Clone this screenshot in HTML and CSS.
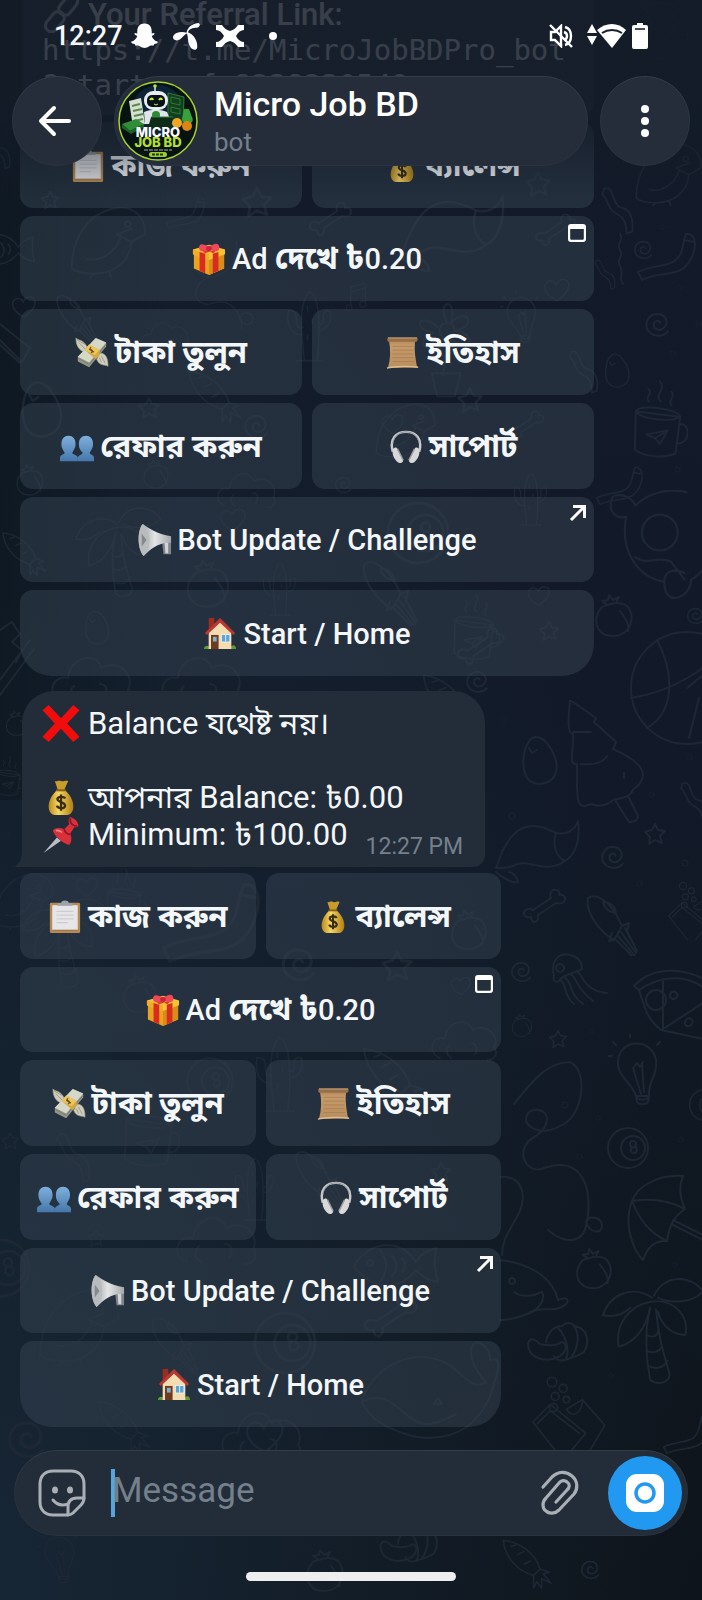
FILE: index.html
```
<!DOCTYPE html>
<html lang="bn">
<head>
<meta charset="utf-8">
<meta name="viewport" content="width=device-width, initial-scale=1">
<title>Micro Job BD</title>
<link rel="stylesheet" href="styles.css">
</head>
<body>
<svg class="defs" aria-hidden="true">
  <defs>
    <linearGradient id="g-gold" x1="0" x2="1"><stop offset="0" stop-color="#b98a1c"/><stop offset=".4" stop-color="#f5d765"/><stop offset="1" stop-color="#b07d12"/></linearGradient>
    <linearGradient id="g-paper" x1="0" x2="0" y1="0" y2="1"><stop offset="0" stop-color="#b08558"/><stop offset=".2" stop-color="#c59b6c"/><stop offset="1" stop-color="#b98e5e"/></linearGradient>
    <linearGradient id="g-blue" x1="0" x2="0" y1="0" y2="1"><stop offset="0" stop-color="#7fb0dc"/><stop offset="1" stop-color="#4577ab"/></linearGradient>
    <linearGradient id="g-horn" x1="0" x2="1"><stop offset="0" stop-color="#8f9295"/><stop offset=".5" stop-color="#e4e5e6"/><stop offset="1" stop-color="#a5a8ab"/></linearGradient>

    <symbol id="e-clip" viewBox="0 0 36 36"><rect x="2" y="3" width="32" height="32" rx="1.500" fill="#b68a50"/><rect x="4.500" y="5.500" width="27" height="26.500" fill="#e6e6e8"/><path d="M9 12h18M9 16h18M9 20h18M9 24h12" stroke="#c5c6ca"/><path d="M10 6V3.500h4a4 3 0 0 1 8 0h4V6z" fill="#9da3ab"/><path d="M4.500 32h27" stroke="#8f6a3a"/></symbol>
    <symbol id="e-bag" viewBox="0 0 36 36"><path d="M12 2c2 1 3-1 6 0s4-1 7 0l-4 9h-6z" fill="#c79c2c"/><path d="M14 11h8c4 4 8 9 8 16 0 5-3 8-6 8H12c-3 0-6-3-6-8 0-7 4-12 8-16z" fill="url(#g-gold)"/><path d="M13.500 11h9" stroke="#8a5f16" stroke-width="2"/><path d="M22 19c-1-2-7-2.500-7.500.5C14.500 23 22 22 22 26c-.5 3.500-7 3-8 0M18 15v16" fill="none" stroke="#3a2c0c" stroke-width="2.200"/></symbol>
    <symbol id="e-gift" viewBox="0 0 36 36"><path d="M2 12v16l16 7 16-7V12L18 18z" fill="#e9a31f"/><path d="M18 18v17l16-7V12z" fill="#d98c16"/><path d="M1 8l17-5 17 5v5l-17 6-17-6z" fill="#f7c136"/><path d="M1 8v5l17 6V13z" fill="#f0ad28"/><path d="M8 10.500l6 2V33l-6-2.500zM22 12.500l6-2v20L22 33z" fill="#d82b22"/><path d="M9 8l13-3 6 2-14 5zM26 8L13 4l-4 2 14 6z" fill="#e23a30"/><path d="M18 8C13 10 8 11 7.500 7 7 2 11 0 18 6c6-6 11-5 11 0s-6 4-11 2z" fill="#ef4858"/><circle cx="18" cy="7" r="3" fill="#c92740"/></symbol>
    <symbol id="e-cash" viewBox="0 0 36 36"><path d="M13 12C9 3 3 5 1 2c0 8 3 13 9 15zM26 18c7 0 9 6 9 14-4-2-9 0-12-7z" fill="#cfcdbb" stroke="#a09f8e" stroke-width=".7"/><path d="M4 7l7 7M2 4l9 5M28 21l4 8M26 23l2 5" stroke="#8f8e7c" stroke-width=".8"/><path d="M3 22L22 2l11 5v4L15 33 3 27z" fill="#939788"/><path d="M3 22L22 2l11 5-18 21z" fill="#d5d8c9"/><path d="M4 24l11 6L33 9" stroke="#6f735f" fill="none" stroke-width=".8"/><path d="M10 14.500l5-5.500 11 5.500v5l-4 5z" fill="#d7a83e"/><path d="M10 14.500l5-5.500 11 5.500-5 5.500z" fill="#e8c664"/><path d="M17 12c-4 3 5 2 0 6M15 14l5 3" fill="none" stroke="#6d4e10" stroke-width="1.300"/></symbol>
    <symbol id="e-scroll" viewBox="0 0 36 36"><path d="M3 4l28 1c-1.500 8 0 18 2 28L2 34C5 24 5 14 3 4z" fill="url(#g-paper)"/><path d="M2 2h31c1 2 0 4-1 4H3C1 6 1 3 2 2z" fill="#9a6f45"/><path d="M2 2h31" stroke="#d9b486"/><path d="M7 11h22M7 15h22M7 19h22M7 23h22M7 27h23" stroke="#a77b4e" stroke-width=".8"/><path d="M1 34c8-2 24-2 33-1" stroke="#e0bd8e" stroke-width="1.600" fill="none"/></symbol>
    <symbol id="e-people" viewBox="0 0 36 36"><g fill="url(#g-blue)"><path d="M19 33v-4c1-3 5-3 5-5-3-3-4-5-4-9 0-6 3-9 7.500-9S35 9 35 15c0 4-2 6-3.500 9 0 2 4 2 4.500 5v4z"/><path d="M0 33v-4c.5-3 4.500-3 5-5-2-3-3.500-5-3.500-9C1.500 9 4.500 6 9 6s7.500 3 7.500 9c0 4-2 6-3.500 9 0 2 5 2 6 5v4z"/></g></symbol>
    <symbol id="e-phones" viewBox="0 0 36 36"><path d="M4 23C0 9 8 2 18 2s18 7 14 21" fill="none" stroke="#c9cacc" stroke-width="2.600"/><path d="M4 14C6 5 12 2 18 2s12 3 14 12" fill="none" stroke="#8b8e92" stroke-width="1"/><path d="M4 21c1-3 4-3 5-1l6 12c0 3-4 4-6 2C6 31 3 27 4 21zM32 21c-1-3-4-3-5-1l-6 12c0 3 4 4 6 2 3-3 6-7 5-13z" fill="#d8d8da"/><path d="M9 20l6 12M27 20l-6 12" stroke="#9b9ea2" stroke-width="1.600"/></symbol>
    <symbol id="e-horn" viewBox="0 0 36 36"><path d="M25 15h10v18h-8z" fill="#7f8488"/><path d="M28 18h4v14h-3z" fill="#d2d5d8"/><path d="M5 1c6 4 15 11 30 13v7c-13-1-22 7-29 14C-1 27-1 8 5 1z" fill="url(#g-horn)"/><path d="M5 1C-1 8-1 27 6 35c4-5 6-11 6-17C12 11 9 5 5 1z" fill="#b9bcbf"/><path d="M4 11v14l5-7z" fill="#85888c"/></symbol>
    <symbol id="e-home" viewBox="0 0 36 36"><path d="M1 34c0-4 4-4 5-3h24c2-2 5-1 5 3z" fill="#5f9a35"/><path d="M6 1h6v12H6z" fill="#9c2b22"/><path d="M6 16L18 4l12 12v18H6z" fill="#f3dcb0"/><path d="M18 1L2 17l2 2L18 6l14 13 2-2z" fill="#b93730"/><path d="M8.500 19h8v15h-8z" fill="#6d3a22"/><path d="M10.500 21h4v5h-4z" fill="#7fb2cf"/><path d="M19 18h10v9H19z" fill="#eee"/><path d="M20 19h8v7h-8z" fill="#5aa5d8"/><path d="M24 19v7" stroke="#eee"/></symbol>
    <symbol id="e-cross" viewBox="0 0 36 36"><path d="M6 0l12 13L30 0l6 5-12 13 12 13-6 5-12-13L6 36l-6-5 12-13L0 5z" fill="#f20d0d"/></symbol>
    <symbol id="e-pin" viewBox="0 0 36 36"><path d="M14 21l4 3L1 36z" fill="#b9bec4"/><path d="M27 1c4 1 7 4 8 8 0 2-2 2-4 2l-4 6c2 5 1 9-1 11-6-1-14-8-16-14 3-3 7-3 11-1l5-5c-1-3-1-6 1-7z" fill="#d9303a"/><path d="M27 2c-1 5 3 8 7 8M21 13c1 3 3 5 6 5" stroke="#8f1520" fill="none" stroke-width="1.600"/><path d="M13 14c3 0 5 1 6 2" stroke="#f58087" stroke-width="1.500" fill="none"/></symbol>
    <symbol id="e-link" viewBox="0 0 36 36"><g fill="none" stroke="#b9bec4" stroke-width="3"><rect x="14" y="3" width="22" height="12" rx="6" transform="rotate(-50 25 9)"/><rect x="1" y="19" width="22" height="12" rx="6" transform="rotate(-50 12 25)"/></g></symbol>
    <symbol id="i-web" viewBox="0 0 20 20"><path fill="#fff" fill-rule="evenodd" d="M4 1h12a3 3 0 0 1 3 3v12a3 3 0 0 1-3 3H4a3 3 0 0 1-3-3V4a3 3 0 0 1 3-3zm-.8 5v9.500c0 .8.500 1.300 1.300 1.300h11c.8 0 1.300-.5 1.300-1.300V6z"/></symbol>
    <symbol id="i-out" viewBox="0 0 20 20"><path d="M4 16L17 3M6 2.500h11.500V14" fill="none" stroke="#fff" stroke-width="3"/></symbol>

    <symbol id="d-star" viewBox="0 0 24 24"><path d="M12 2l3 6 7 1-5 5 2 7-7-3-6 4 1-7-5-5 7-2z"/></symbol>
    <symbol id="d-swirl" viewBox="0 0 24 24"><path d="M22 18c-5 6-15 5-19-2C0 8 6 1 13 2c7 0 10 8 6 12-3 4-10 3-10-2 0-4 5-5 6-2"/></symbol>
    <symbol id="d-dot" viewBox="0 0 24 24"><circle cx="12" cy="12" r="9"/></symbol>
    <symbol id="d-bone" viewBox="0 0 48 36"><path d="M13 23l18-12c-2-5 1-9 5-8 3 0 4 3 3 5 4-1 7 2 6 5-1 3-5 4-9 3L18 28c1 4-1 7-4 7-3-1-3-3-3-5-4 1-8-1-7-5 1-3 5-4 9-2z"/></symbol>
    <symbol id="d-heart" viewBox="0 0 36 36"><path d="M18 31C4 24 2 16 4 11c3-6 11-5 13 1 2-7 10-9 14-4 4 7-2 15-13 23z"/></symbol>
    <symbol id="d-egg" viewBox="0 0 40 52"><path d="M14 2c12-1 24 22 21 34-2 12-18 17-27 9C-2 35 2 5 14 2zM8 13l3 5 5-3"/></symbol>
    <symbol id="d-mug" viewBox="0 0 60 84"><path d="M6 36l46 6-5 38c-14 5-32 3-42-4zM6 36c3-8 46-2 46 6-10 6-42 2-46-6zM51 50c12-4 12 22-3 19M17 60l22-4-8 14-5-6zM26 64l13-8M20 26c-6-5 5-8-1-13M32 26c-8-7 6-12-1-21M43 30c-5-5 5-9 0-14"/></symbol>
    <symbol id="d-tree" viewBox="0 0 84 124"><path d="M4 0L30 18l-2 4 22 20-3 7c18 8 34 18 29 30-4 10-9 9-9 11-3 8-12 8-20 10-9 8-17 6-22 4-16 7-14-5-14-40C2 66 8 50 7 34 0 34 3 12 4 0zM7 32h18M15 64c16 1 22-2 26-8M49 100l14 22c8 0 10-4 8-8l-9-18M58 73v5"/></symbol>
    <symbol id="d-cap" viewBox="0 0 90 66"><path d="M2 48C14 10 32-4 62 13c9 2 18-1 22-12 2 18-2 33-13 40-20 14-36-3-50 4-9 4-14 3-19 3zM62 13c-4 12 0 24 9 28M2 52c6 6 18 12 22 10-1-6-6-10-9-10"/></symbol>
    <symbol id="d-squid" viewBox="0 0 54 62"><path d="M3 4c8-6 24 4 34 28l-8 14C12 36 0 16 3 4zM18 8c8 0 12 5 13 11-6 0-12-5-13-11zM37 32l7-3-2 8 10 20M29 46l-5 1 3-8M33 42l17 20M36 38l15 21M30 45l17 17M40 34l11 21"/></symbol>
    <symbol id="d-jelly" viewBox="0 0 60 54"><path d="M4 24C0 8 10 0 20 3c9 2 12 8 12 14-5 4-20 5-23 12-3 2-7-1-5-5zM10 12a4 4 0 1 0 .1 0M10 28c8 4 2 14 14 24M15 26c8 4 2 14 18 26M21 22c7 6 5 14 22 27M27 19c6 5 8 20 30 22"/></symbol>
    <symbol id="d-pizza" viewBox="0 0 90 80"><path d="M2 18C22-4 60-2 88 22l-4 8C60 4 30 6 7 22zM7 22c8 26 10 30 22 40l56 12M31 11v50l46-30M38 26c3-5 9-1 7 3-4 5-8 0-7-3zM54 52c5-5 9 2 5 5-4 3-8 0-5-5z"/><circle cx="24" cy="32" r="10"/></symbol>
    <symbol id="d-bulb" viewBox="0 0 60 80"><path d="M28 62C24 48 8 42 10 26 13 4 44 4 48 26c2 16-8 20-7 36zM28 62c2 5 11 5 13 0l-1 6c-2 3-9 3-11 0zM25 34l8 26M36 58l-2-28M25 34l4-5 3 4 3-5M5 8l3 3M22 0v3M52 8l-3 3M0 22h4"/></symbol>
    <symbol id="d-umb" viewBox="0 0 90 90"><path d="M60 2C36 0 14 12 9 27 0 50 10 76 20 86c4-12 12-20 24-19 2-14 6-24 18-32-6-13-6-24-2-33zM9 27c20-3 36-1 53 8M9 27c8 20 18 32 35 40M50 46l40 20M48 50l40 20"/></symbol>
    <symbol id="d-palm" viewBox="0 0 108 112"><path d="M52 20C34 8 10 14 2 38c10 2 20 0 28-8M52 24C28 28 14 48 18 70c16-4 28-18 32-40M54 24c20-2 36 14 32 34-12 0-24-8-28-24M54 18C64-4 92-4 104 14c-12 12-34 12-46 6M50 32c-6 20-4 50 0 72 8 6 20 2 20-6-6-20-12-40-14-66M46 58c8 4 12 0 12-4M46 74c8 4 14 0 16-4M50 90c8 4 14 0 18-6"/></symbol>
    <symbol id="d-ball" viewBox="0 0 120 120"><circle cx="60" cy="60" r="56"/><path d="M30 12c16 30 20 70-10 88M4 70c40-6 80-30 94-54M60 60l22-18 6 22 24 4M62 110l10-40"/></symbol>
    <symbol id="d-rope" viewBox="0 0 90 130"><path d="M64 2c4 30-14 48-36 52-26 0-24-24-10-26 16-2 20 18 6 26-30 14-20 44 4 38 30-12 50 20 42 48-2 14-14 22-28 14l-10-5M70 112c2-10 18-8 18 2s-16 12-18-2"/></symbol>
    <symbol id="d-sock" viewBox="0 0 40 60"><path d="M4 4c12-4 8 18 18 20s14 12 12 26l-6 2c0-14-4-18-12-22S8 14 2 10z"/></symbol>
    <symbol id="d-band" viewBox="0 0 60 50"><path d="M50 2c14-2 10 24-2 34-10 8-26 4-42 12l-4-8c16-8 28-4 38-12 8-8 6-16 10-26zM48 8l10 2"/></symbol>
    <symbol id="d-fruit" viewBox="0 0 44 44"><path d="M16 10C4 10-2 34 14 40c20 6 32-14 22-28-6-6-16-4-20-2zM16 10l-6-4 6-1 1-5 4 5 6-3-3 6M28 16c6 8 10 14 8 20"/></symbol>
    <symbol id="d-cloud" viewBox="0 0 90 60"><path d="M12 52C-6 44 4 24 18 28 20 8 44 0 52 18c14-10 34 6 26 22 6 6 0 14-8 14M24 36c-6 6-4 12 2 16M50 34c8 0 8 10 4 14"/></symbol>
    <symbol id="d-turtle" viewBox="0 0 90 100"><path d="M10 6c-6 14 4 20 12 18-6 30 10 54 34 58 0 10 4 16 12 14 8-2 12-10 12-16 12-6 18-20 18-30M10 6c10-4 18 2 20 8 12-12 30-16 46-12M30 60c12 8 20-2 32 4l12 16M56 82c0-10 8-12 18-8"/><circle cx="52" cy="38" r="16"/></symbol>
    <symbol id="d-bird" viewBox="0 0 90 80"><path d="M4 70C4 40 20 12 50 6c20-4 34 10 32 28l-14 8c-2 22-20 34-40 34-12 0-20-2-24-6zM20 60c14 4 30-6 36-22M64 20a3 3 0 1 0 .1 0M68 42L52 34l16-6M28 76l-4 4M44 74l2 6"/></symbol>
    <symbol id="d-fish" viewBox="0 0 90 60"><path d="M4 30C20 4 50 2 66 26c6-10 14-12 20-14-2 12-2 20 2 34-8-2-16-4-22-12C48 56 20 54 4 30zM20 24a3 3 0 1 0 .1 0M30 14c8 10 8 22 0 32M42 20c6 6 6 14 0 20M52 22c4 4 4 10 0 14"/></symbol>
    <symbol id="d-orange" viewBox="0 0 66 42"><path d="M2 22c2-8 8-4 12 0 8 2 16 2 22-2 6 2 4 10-2 14-14 8-32 2-32-12zM20 20c2-10 8-16 16-16 4-4 10-4 12 0 14 2 16 16 10 26-6 4-12 6-20 8-6 2-8-2-10-4M32 6c8 8 12 22 8 32M48 4c6 8 4 22-2 30"/></symbol>
    <symbol id="d-whale" viewBox="0 0 140 110"><path d="M2 66C10 34 50 10 84 26c20 10 26 30 42 20-14-14-20-34-10-40 10 2 14 10 14 18 6-2 10 0 8 10-4 12-6 30-20 46-14 18-40 26-66 20C26 92 10 84 2 66zM2 66c20-10 30 0 46 14 14 12 26 10 48-2M78 62l-4 6h8z"/></symbol>
    <symbol id="d-carrot" viewBox="0 0 70 70"><path d="M4 4c20 2 40 16 46 36l-8 8C20 42 6 24 4 4zM50 40l12 4-8 2 10 12-12-6 0 12-6-8-4 8v-16M14 12l6-2M22 22l8-4M30 34l8-4"/></symbol>
    <symbol id="d-cactus" viewBox="0 0 70 100"><path d="M28 92C24 60 20 20 34 6c14 4 14 50 10 86zM26 60C8 60 6 44 8 30c8-2 10 4 10 12s2 10 8 8M46 54c14-2 16-14 14-24-8-2-10 4-8 12-2 6-4 4-6 4M18 92h34M32 24v6M38 40v6M32 60v6"/></symbol>
    <symbol id="d-pop" viewBox="0 0 96 100"><path d="M4 60L26 38l44 36-28 34zM10 62l16-16 36 28M46 44L66 32l28 32-20 34M46 44c6 12 20 6 20-12"/><circle cx="28" cy="10" r="6"/><circle cx="42" cy="18" r="5"/><circle cx="32" cy="28" r="5"/><circle cx="46" cy="32" r="4"/><circle cx="30" cy="42" r="5"/></symbol>
    <symbol id="d-ring" viewBox="0 0 44 44"><circle cx="22" cy="22" r="20"/><circle cx="27" cy="22" r="12"/><circle cx="27" cy="18" r="3"/><circle cx="28" cy="24" r="3"/></symbol>
    <symbol id="d-notes" viewBox="0 0 40 60"><path d="M8 40V8l24-6v32M8 16l24-6"/><circle cx="5" cy="43" r="5"/><circle cx="28" cy="37" r="5"/></symbol>
    <symbol id="d-flower" viewBox="0 0 60 100"><path d="M30 22c-12-26 12-26 4 0 18-18 28 4 4 8 26 4 16 24-4 8 8 24-16 26-10 2-14 18-30 2-8-8-24-4-14-22 4-6M30 42l-4 34M14 74h30l-6 24H20z"/><circle cx="30" cy="30" r="8"/></symbol>
  </defs>
</svg>

<div class="screen">
  <svg class="wallpaper" viewBox="0 0 702 1600" preserveAspectRatio="xMidYMin slice" aria-hidden="true">
    <use href="#d-ball" x="630" y="0" width="60" height="62"/><use href="#d-bird" x="630" y="140" width="80" height="66"/><use href="#d-sock" x="600" y="185" width="38" height="56"/><use href="#d-band" x="636" y="232" width="60" height="50"/><use href="#d-swirl" x="633" y="240" width="20" height="20"/><use href="#d-dot" x="659" y="224" width="6" height="6"/><use href="#d-sock" x="594" y="250" width="24" height="52"/><path d="M620 234c5 8-5 8 0 16s-5 8 0 16-3 10 3 18"/>
    <use href="#d-dot" x="676" y="284" width="7" height="7"/><use href="#d-swirl" x="644" y="312" width="26" height="26"/><use href="#d-egg" x="604" y="352" width="28" height="38"/><use href="#d-dot" x="669" y="350" width="7" height="7"/><use href="#d-dot" x="695" y="320" width="7" height="7"/><use href="#d-mug" x="630" y="375" width="58" height="84"/><use href="#d-dot" x="674" y="466" width="7" height="7"/><use href="#d-band" x="594" y="466" width="50" height="40"/>
    <use href="#d-fruit" x="592" y="594" width="44" height="46"/><use href="#d-turtle" x="600" y="490" width="104" height="112"/><use href="#d-swirl" x="686" y="604" width="18" height="24"/><use href="#d-ball" x="622" y="628" width="130" height="120"/><use href="#d-tree" x="566" y="700" width="84" height="124"/><use href="#d-egg" x="521" y="735" width="40" height="52"/><use href="#d-dot" x="500" y="717" width="7" height="7"/><use href="#d-cap" x="494" y="820" width="90" height="66"/><use href="#d-star" x="643" y="822" width="24" height="24"/><use href="#d-swirl" x="600" y="845" width="25" height="25"/><use href="#d-dot" x="508" y="812" width="8" height="8"/><use href="#d-dot" x="686" y="754" width="7" height="7"/><use href="#d-sock" x="676" y="780" width="40" height="50"/><use href="#d-dot" x="681" y="859" width="8" height="8"/><use href="#d-dot" x="636" y="880" width="7" height="7"/><use href="#d-dot" x="648" y="791" width="7" height="7"/>
    <use href="#d-bone" x="520" y="887" width="48" height="36"/><use href="#d-squid" x="584" y="894" width="56" height="62"/><use href="#d-pop" x="660" y="880" width="70" height="60"/><use href="#d-swirl" x="510" y="959" width="22" height="26"/><use href="#d-jelly" x="550" y="952" width="60" height="54"/><use href="#d-pizza" x="632" y="968" width="90" height="80"/><use href="#d-star" x="548" y="1029" width="20" height="20"/><use href="#d-fruit" x="510" y="1014" width="24" height="24"/><use href="#d-dot" x="589" y="1028" width="6" height="6"/><use href="#d-bulb" x="608" y="1034" width="60" height="80"/>
    <path d="M514 1104c16-20 32-42 56-42 18 8 14 50-6 62-10 6-20 8-26 6-18-4-14-22 0-20 14 2 10 18-2 26-24 12-10 40 8 32 40-14 50 24 42 58-4 18-22 18-38 4M586 1222c4-8 16-4 16 4s-12 8-16-4"/><use href="#d-dot" x="561" y="1101" width="8" height="8"/><use href="#d-dot" x="595" y="1115" width="6" height="6"/><use href="#d-dot" x="576" y="1153" width="7" height="7"/><use href="#d-ring" x="606" y="1126" width="44" height="44"/><use href="#d-ring" x="688" y="1088" width="34" height="34"/><use href="#d-dot" x="677" y="1136" width="7" height="7"/><use href="#d-umb" x="623" y="1174" width="90" height="90"/><use href="#d-fruit" x="573" y="1248" width="42" height="44"/><path d="M500 1177c22-2 28 18 18 38-10 18-16 26-16 40M500 1260c36 4 54 22 58 40 8-4 12 0 8 4-8 8-22 4-30 6-12 6-26 10-36 10M514 1292c8 6 20 4 28 0 4 8-4 18-12 20M512 1278a3 3 0 1 0 .1 0"/><use href="#d-palm" x="600" y="1278" width="108" height="110"/><use href="#d-orange" x="526" y="1322" width="66" height="42"/><use href="#d-dot" x="672" y="1262" width="6" height="6"/><use href="#d-dot" x="608" y="1373" width="6" height="6"/><use href="#d-pop" x="520" y="1374" width="96" height="80"/><use href="#d-band" x="656" y="1415" width="60" height="40"/>
    <use href="#d-sock" x="-16" y="120" width="30" height="64"/><use href="#d-fish" x="-30" y="215" width="66" height="70"/><use href="#d-heart" x="10" y="292" width="28" height="30"/><path d="M0 324l30 24-8 14L0 340M0 345l20 18"/><use href="#d-egg" x="8" y="380" width="70" height="60"/><use href="#d-fruit" x="14" y="458" width="32" height="46"/><use href="#d-carrot" x="0" y="525" width="50" height="60"/><path d="M0 630l12-8 8 12-8 8 10 8-6 12M0 680l30-40M0 695l34-46"/><use href="#d-fruit" x="4" y="710" width="26" height="28"/><use href="#d-mug" x="-6" y="740" width="30" height="70"/><use href="#d-dot" x="4" y="831" width="7" height="7"/>
    <use href="#d-star" x="40" y="190" width="20" height="20"/><use href="#d-bird" x="68" y="200" width="84" height="80"/><use href="#d-star" x="240" y="185" width="34" height="34"/><use href="#d-band" x="165" y="190" width="40" height="46"/><use href="#d-bone" x="306" y="200" width="48" height="36"/><use href="#d-cap" x="400" y="180" width="110" height="110"/><use href="#d-star" x="524" y="170" width="28" height="28"/><use href="#d-bone" x="532" y="206" width="46" height="46"/><use href="#d-heart" x="542" y="275" width="30" height="30"/><use href="#d-flower" x="418" y="300" width="58" height="100"/><use href="#d-cactus" x="282" y="262" width="56" height="130"/><use href="#d-notes" x="346" y="270" width="24" height="60"/><use href="#d-bulb" x="500" y="290" width="44" height="60"/><use href="#d-rope" x="190" y="240" width="66" height="90"/><use href="#d-cloud" x="140" y="316" width="54" height="40"/><use href="#d-squid" x="52" y="294" width="50" height="50"/><use href="#d-star" x="137" y="396" width="24" height="24"/><use href="#d-swirl" x="243" y="414" width="26" height="26"/><use href="#d-carrot" x="186" y="360" width="60" height="76"/><use href="#d-fruit" x="136" y="460" width="40" height="30"/><use href="#d-cloud" x="216" y="460" width="66" height="60"/><use href="#d-star" x="456" y="386" width="28" height="28"/><use href="#d-bird" x="372" y="400" width="70" height="60"/><use href="#d-bone" x="506" y="404" width="40" height="40"/><use href="#d-heart" x="380" y="410" width="26" height="28"/><use href="#d-swirl" x="334" y="476" width="18" height="18"/><use href="#d-cactus" x="508" y="470" width="46" height="60"/><use href="#d-sock" x="568" y="346" width="34" height="56"/>
    <use href="#d-palm" x="74" y="494" width="90" height="120"/><use href="#d-heart" x="216" y="505" width="34" height="30"/><use href="#d-ring" x="378" y="500" width="80" height="66"/><use href="#d-squid" x="360" y="560" width="60" height="66"/><use href="#d-cactus" x="250" y="560" width="60" height="60"/><use href="#d-fruit" x="180" y="560" width="56" height="50"/><use href="#d-mug" x="440" y="590" width="70" height="70"/><use href="#d-heart" x="526" y="582" width="26" height="28"/><use href="#d-star" x="538" y="620" width="22" height="22"/><use href="#d-bone" x="440" y="625" width="80" height="40"/><use href="#d-egg" x="80" y="610" width="36" height="36"/><use href="#d-cloud" x="40" y="650" width="110" height="60"/><use href="#d-cloud" x="160" y="650" width="90" height="60"/><use href="#d-swirl" x="465" y="670" width="24" height="24"/><use href="#d-carrot" x="420" y="672" width="60" height="60"/>
    <use href="#d-bird" x="-10" y="870" width="70" height="60"/><use href="#d-palm" x="20" y="880" width="90" height="130"/><use href="#d-heart" x="74" y="872" width="26" height="30"/><use href="#d-band" x="160" y="880" width="100" height="86"/><use href="#d-mug" x="100" y="866" width="50" height="60"/><use href="#d-fruit" x="120" y="970" width="40" height="50"/><use href="#d-swirl" x="280" y="945" width="36" height="40"/><use href="#d-star" x="380" y="946" width="34" height="40"/><use href="#d-fruit" x="448" y="908" width="42" height="46"/><use href="#d-heart" x="448" y="974" width="26" height="24"/><use href="#d-cloud" x="430" y="1010" width="74" height="60"/><use href="#d-cactus" x="250" y="1030" width="60" height="90"/><use href="#d-ring" x="180" y="1056" width="60" height="50"/><use href="#d-carrot" x="360" y="1040" width="70" height="80"/><use href="#d-mug" x="120" y="1080" width="60" height="90"/><use href="#d-star" x="0" y="1130" width="20" height="22"/><use href="#d-sock" x="50" y="1130" width="50" height="60"/><use href="#d-squid" x="290" y="1150" width="60" height="60"/><use href="#d-cactus" x="230" y="1140" width="50" height="100"/><use href="#d-star" x="86" y="1228" width="20" height="20"/><use href="#d-cloud" x="150" y="1210" width="140" height="60"/><use href="#d-fish" x="350" y="1236" width="90" height="60"/><use href="#d-ring" x="-30" y="1235" width="62" height="66"/><use href="#d-star" x="430" y="1160" width="22" height="24"/>
    <use href="#d-bird" x="36" y="1270" width="90" height="110"/><use href="#d-ring" x="250" y="1310" width="70" height="66"/><use href="#d-squid" x="150" y="1310" width="50" height="70"/><use href="#d-bone" x="360" y="1280" width="60" height="70"/><use href="#d-whale" x="360" y="1336" width="140" height="110"/><use href="#d-swirl" x="6" y="1420" width="40" height="40"/><use href="#d-carrot" x="90" y="1398" width="70" height="60"/><use href="#d-heart" x="240" y="1414" width="50" height="44"/><use href="#d-cloud" x="210" y="1405" width="110" height="60"/><use href="#d-bulb" x="30" y="1530" width="60" height="60"/><use href="#d-fruit" x="300" y="1550" width="50" height="44"/><use href="#d-orange" x="365" y="1525" width="90" height="40"/><use href="#d-carrot" x="500" y="1535" width="56" height="60"/><use href="#d-swirl" x="580" y="1560" width="20" height="20"/>
  </svg>

  <main class="chat">
    <article class="bubble bubble-link">
      <p class="line strong"><svg class="emoji" role="img" aria-label="🔗"><use href="#e-link"/></svg>Your Referral Link:</p>
      <p class="code">https://t.me/MicroJobBDPro_bot<br>?start=ref_8238230549</p>
    </article>

    <div class="keyboard">
      <button type="button"><svg class="emoji" aria-hidden="true"><use href="#e-clip"/></svg><b>কাজ করুন</b></button>
      <button type="button"><svg class="emoji" aria-hidden="true"><use href="#e-bag"/></svg><b>ব্যালেন্স</b></button>
      <button type="button" class="wide"><svg class="emoji" aria-hidden="true"><use href="#e-gift"/></svg><span>Ad <b>দেখে ৳</b>0.20</span><svg class="corner" aria-hidden="true"><use href="#i-web"/></svg></button>
      <button type="button"><svg class="emoji" aria-hidden="true"><use href="#e-cash"/></svg><b>টাকা তুলুন</b></button>
      <button type="button"><svg class="emoji" aria-hidden="true"><use href="#e-scroll"/></svg><b>ইতিহাস</b></button>
      <button type="button"><svg class="emoji" aria-hidden="true"><use href="#e-people"/></svg><b>রেফার করুন</b></button>
      <button type="button"><svg class="emoji" aria-hidden="true"><use href="#e-phones"/></svg><b>সাপোর্ট</b></button>
      <button type="button" class="wide"><svg class="emoji" aria-hidden="true"><use href="#e-horn"/></svg><span>Bot Update / Challenge</span><svg class="corner" aria-hidden="true"><use href="#i-out"/></svg></button>
      <button type="button" class="wide last"><svg class="emoji" aria-hidden="true"><use href="#e-home"/></svg><span>Start / Home</span></button>
    </div>

    <article class="bubble bubble-balance">
      <svg class="tail" viewBox="0 0 20 30" aria-hidden="true"><path d="M8 0v14c0 8-3 13-8 16h20V0z"/></svg>
      <p class="line"><svg class="emoji" role="img" aria-label="❌"><use href="#e-cross"/></svg>Balance যথেষ্ট নয়।</p>
      <p class="line"></p>
      <p class="line"><svg class="emoji" role="img" aria-label="💰"><use href="#e-bag"/></svg>আপনার Balance: ৳0.00</p>
      <p class="line"><svg class="emoji" role="img" aria-label="📌"><use href="#e-pin"/></svg>Minimum: ৳100.00<time>12:27 PM</time></p>
    </article>

    <div class="keyboard keyboard-narrow">
      <button type="button"><svg class="emoji" aria-hidden="true"><use href="#e-clip"/></svg><b>কাজ করুন</b></button>
      <button type="button"><svg class="emoji" aria-hidden="true"><use href="#e-bag"/></svg><b>ব্যালেন্স</b></button>
      <button type="button" class="wide"><svg class="emoji" aria-hidden="true"><use href="#e-gift"/></svg><span>Ad <b>দেখে ৳</b>0.20</span><svg class="corner" aria-hidden="true"><use href="#i-web"/></svg></button>
      <button type="button"><svg class="emoji" aria-hidden="true"><use href="#e-cash"/></svg><b>টাকা তুলুন</b></button>
      <button type="button"><svg class="emoji" aria-hidden="true"><use href="#e-scroll"/></svg><b>ইতিহাস</b></button>
      <button type="button"><svg class="emoji" aria-hidden="true"><use href="#e-people"/></svg><b>রেফার করুন</b></button>
      <button type="button"><svg class="emoji" aria-hidden="true"><use href="#e-phones"/></svg><b>সাপোর্ট</b></button>
      <button type="button" class="wide"><svg class="emoji" aria-hidden="true"><use href="#e-horn"/></svg><span>Bot Update / Challenge</span><svg class="corner" aria-hidden="true"><use href="#i-out"/></svg></button>
      <button type="button" class="wide last"><svg class="emoji" aria-hidden="true"><use href="#e-home"/></svg><span>Start / Home</span></button>
    </div>
  </main>

  <header class="top">
    <div class="status">
      <span class="clock">12:27</span>
      <svg class="st-ghost" viewBox="0 0 28 26" aria-hidden="true"><path d="M14 0c5 0 7.500 3.500 7.500 8v2.500l2.500-.5c1 1 0 2-2.500 3 1 3 3 5 6.500 6-.5 2-2 2-4 2.500l-.7 1.500c-3-.7-4 .2-5 1-2.500 2-6 2-8.600 0-1-.8-2-1.700-5-1L4 21.500c-2-.5-3.500-.5-4-2.500 3.500-1 5.500-3 6.500-6C4 12 3 11 4 10l2.500.5V8C6.500 3.500 9 0 14 0z"/></svg>
      <svg class="st-prop" viewBox="0 0 28 28" aria-hidden="true"><path d="M14 10C15 5 19 1 26 0c3 .5 2 4-1 5-5 0-8 1-9.500 4.500C22 12 26 19 25 26c-1 3-5 2-7-1-3-5-2-9-3.500-14C11 12 8 19 3 18-1 17-1 13 3 10.500 7 9 11 9 14 10z"/></svg>
      <svg class="st-x" viewBox="0 0 28 22" aria-hidden="true"><path d="M0 0h6c2 3 4 5 8 6 4-1 6-3 8-6h6v5c-3 0-6 2-8 6 2 4 5 6 8 6v5h-6c-2-3-4-5-8-6-4 1-6 3-8 6H0v-5c3 0 6-2 8-6C6 7 3 5 0 5z"/></svg>
      <span class="st-dot"></span>
      <svg class="st-mute" viewBox="0 0 24 24" aria-hidden="true"><path d="M2 8h4l6-6v20l-6-6H2zM16 3c8 2 8 16 0 18M15 8c4 1 4 7 0 8" fill="none" stroke="#fff" stroke-width="2.400"/><path d="M1 1l22 22" stroke="#fff" stroke-width="2.400"/></svg>
      <svg class="st-wifi" viewBox="0 0 39 26" aria-hidden="true"><path d="M5 1l5 9H0zM5 22l5-9H0z"/><path d="M25 25L10 7c9-8 21-8 29 0z"/><path d="M15 10c6-4 14-4 20 0" fill="none" stroke="#17202d" stroke-width="2"/></svg>
      <svg class="st-batt" viewBox="0 0 16 26" aria-hidden="true"><path d="M5 0h6v2h3a2 2 0 0 1 2 2v20a2 2 0 0 1-2 2H2a2 2 0 0 1-2-2V4a2 2 0 0 1 2-2h3z"/><path d="M3 6h10" stroke="#17202d" stroke-width="1.600"/></svg>
    </div>
    <nav class="bar">
      <button type="button" class="round" aria-label="Back"><svg viewBox="0 0 38 32" width="38" height="32" fill="none" stroke="#fff" stroke-width="4" stroke-linecap="round" stroke-linejoin="round"><path d="M31 16H3M16 3L3 16l13 13"/></svg></button>
      <a class="peer" href="#profile">
        <svg class="avatar" viewBox="0 0 80 80" aria-hidden="true">
          <circle cx="40" cy="40" r="39" fill="#071310" stroke="#a6d32c" stroke-width="1.500"/>
          <circle cx="40" cy="30" r="26" fill="#0d2438"/>
          <path d="M50 12l16 4-1 28-15-4zM53 16l9 2v6l-9-2zM53 26l9 2v5l-9-2z" fill="#10401d" stroke="#2f7a32"/>
          <path d="M11 20l12-3 4 26-12 3z" fill="#d5dfd2"/><path d="M14 25l8-2M15 30l9-2M16 35l9-2M17 40l8-2" stroke="#5c8a4e" stroke-width="2"/>
          <path d="M37 10V5" stroke="#dfe6ea" stroke-width="1.500"/><circle cx="37" cy="5" r="1.800" fill="#b7e437"/>
          <rect x="26" y="10" width="24" height="19" rx="9" fill="#e7ecef"/><rect x="29" y="14" width="18" height="12" rx="5" fill="#071015"/>
          <path d="M32 19q2-3 3 0M41 19q2-3 3 0" stroke="#c6f03b" stroke-width="2.200" fill="none"/><path d="M36 23q2 2 4 0" stroke="#c6f03b" fill="none"/>
          <path d="M26 31c7-3 16-3 23 0l5 12H27z" fill="#dfe5e8"/><circle cx="38" cy="34" r="4" fill="#2c8a36"/>
          <path d="M33 36h22l-2 11H30z" fill="#0d2d18"/><path d="M33 36h22" stroke="#3a7d45"/>
          <path d="M4 43l14-5 8 5-14 7z" fill="#2f8d37"/><path d="M4 43v4l9 6 13-7v-3l-14 7z" fill="#1c6226"/>
          <path d="M66 28l5 0 3 8c4 8-9 9-10 2z" fill="#37a13d"/><circle cx="59" cy="42" r="5" fill="#f0a723"/><circle cx="69" cy="45" r="5" fill="#dd8413"/>
          <g text-anchor="middle" font-family="Inter, Roboto, sans-serif" font-weight="800"><text x="40" y="56" font-size="13" fill="#fff">MICRO</text><text x="40" y="66" font-size="13" fill="#b4e02d">JOB BD</text></g>
          <path d="M26 69h28" stroke="#9fb29a" stroke-dasharray="4 1"/><rect x="31" y="71" width="18" height="5" rx="2.500" fill="#9fce2c"/>
          <path d="M34 73.500h12" stroke="#1c3a10" stroke-width="2" stroke-dasharray="3 1"/>
        </svg>
        <span class="who"><span class="name">Micro Job BD</span><span class="kind">bot</span></span>
      </a>
      <button type="button" class="round" aria-label="More options"><svg viewBox="0 0 10 34" width="10" height="34" fill="#fff"><circle cx="5" cy="5" r="4"/><circle cx="5" cy="17" r="4"/><circle cx="5" cy="29" r="4"/></svg></button>
    </nav>
  </header>

  <footer class="composer">
    <button type="button" class="tool" aria-label="Stickers"><svg viewBox="0 0 48 48" width="48" height="48" fill="none" stroke="#a9afb5" stroke-width="3" stroke-linecap="round" stroke-linejoin="round"><path d="M15 2h18c8 0 13 5 13 13v14c0 3-1 5-3 7l-8 8c-2 2-4 2-6 2H15C7 46 2 41 2 33V15C2 7 7 2 15 2z"/><path d="M30 46v-8c0-6 3-9 9-9h7M15 31c4 5 9 6 15 4"/><g fill="#a9afb5" stroke="none"><ellipse cx="17" cy="21" rx="3" ry="3.500"/><ellipse cx="32" cy="21" rx="3" ry="3.500"/></g></svg></button>
    <label class="entry"><input type="text" placeholder="Message" aria-label="Message"></label>
    <button type="button" class="tool" aria-label="Attach"><svg viewBox="0 0 40 46" width="40" height="46" fill="none" stroke="#a9afb5" stroke-width="3.200" stroke-linecap="round"><path d="M3 17L12 7c6-6 14-6 20-1 6 5 6 13 2 18L19 40c-4 4-10 4-13 1-4-3-4-9 0-13l13-15c2-3 6-3 8-1 3 2 3 5 0 8L16 32"/></svg></button>
    <button type="button" class="camera" aria-label="Record video"><svg viewBox="0 0 38 38" width="38" height="38"><rect width="38" height="38" rx="11" fill="#fff"/><circle cx="19" cy="19" r="9" fill="#fff" stroke="#2299f0" stroke-width="3.500"/></svg></button>
  </footer>
  <div class="gesture"></div>
</div>
</body>
</html>
```
FILE: styles.css
```
* { box-sizing: border-box; }

body {
  margin: 0;
  background: #101822;
  color: #f4f7fa;
  font-family: Roboto, "Noto Sans Bengali", "Noto Sans", sans-serif;
}

button {
  border: 0;
  padding: 0;
  color: inherit;
  font: inherit;
}

p { margin: 0; }

.defs { position: absolute; width: 0; height: 0; }

.screen {
  position: relative;
  display: flex;
  flex-direction: column;
  min-height: 100vh;
  overflow: hidden;
  background:
    linear-gradient(90deg, rgba(12, 22, 30, .6), transparent 25%) top / 100% 50% no-repeat,
    radial-gradient(ellipse at 0% 100%, #172635 0%, rgba(23, 38, 53, 0) 70%),
    linear-gradient(180deg, #131b2a 0%, #121a29 50%, #0f1720 80%, #0e141b 100%);
}

.wallpaper {
  position: absolute;
  inset: 0;
  width: 100%;
  height: 100%;
  fill: none;
  stroke: #1d2834;
  stroke-width: 2;
  stroke-linejoin: round;
  stroke-linecap: round;
}

.wallpaper path, .wallpaper circle { vector-effect: non-scaling-stroke; }

.chat {
  position: relative;
  flex: 1;
  display: flex;
  flex-direction: column;
  align-items: flex-start;
  padding: 0 20px 23px;
}

.emoji { flex: none; width: 34px; height: 34px; }

.bubble {
  position: relative;
  margin-left: 2px;
  padding: 14px 20px;
  background: #222d39;
  border-radius: 32px 32px 12px 4px;
}

.line {
  display: flex;
  align-items: center;
  gap: 8px;
  min-height: 37px;
  font-size: 31px;
  line-height: 37px;
  white-space: nowrap;
}

.line .emoji { width: 38px; height: 37px; }
.strong { font-weight: 500; }

.bubble-link {
  width: 100%;
  max-width: 572px;
  height: 115px;
  padding-top: 0;
  border-radius: 0 0 12px 4px;
  display: flex;
  flex-direction: column;
  justify-content: flex-end;
  padding-bottom: 12px;
}

.code {
  font-family: "DejaVu Sans Mono", monospace;
  font-size: 29px;
  line-height: 35px;
}

.keyboard {
  display: grid;
  grid-template-columns: 1fr 1fr;
  grid-auto-rows: 1fr;
  gap: 8px 10px;
  width: 100%;
  max-width: 574px;
  min-height: 554px;
  margin: 7px 0 15px;
}

.keyboard-narrow { max-width: 481px; margin: 6px 0 0; }

.keyboard button {
  position: relative;
  display: flex;
  align-items: center;
  justify-content: center;
  gap: 6px;
  padding-top: 2px;
  border-radius: 13px;
  background: rgba(56, 70, 84, .48);
  font-size: 29px;
  font-weight: 500;
  line-height: 36px;
  white-space: nowrap;
}

.keyboard b { font-size: 31px; font-weight: 700; }
.keyboard .wide { grid-column: 1 / -1; }
.keyboard .last { border-radius: 13px 13px 32px 32px; }

.corner {
  position: absolute;
  top: 7px;
  right: 7px;
  width: 20px;
  height: 20px;
}

.bubble-balance { padding-right: 22px; }

.tail {
  position: absolute;
  left: -8px;
  bottom: 0;
  width: 20px;
  height: 30px;
  fill: #222d39;
}

time {
  align-self: flex-end;
  margin: 0 0 -7px 10px;
  color: #74808c;
  font-size: 23px;
  line-height: 26px;
}

/* Header floats over the scrolled conversation */
.top {
  position: absolute;
  inset: 0 0 auto;
  height: 210px;
  background: linear-gradient(180deg, rgba(20, 28, 40, .84) 0, rgba(20, 28, 40, .84) 100px, rgba(18, 27, 40, .7) 125px, rgba(18, 27, 40, 0) 200px);
}

.status {
  display: flex;
  align-items: center;
  height: 76px;
  padding: 0 54px;
  padding-bottom: 4px;
  fill: #fff;
}

.clock { width: 77px; font-size: 27px; font-weight: 500; line-height: 32px; }
.st-ghost { width: 27px; height: 26px; margin-right: 15px; }
.st-prop { width: 27px; height: 27px; margin-right: 16px; }
.st-x { width: 28px; height: 22px; margin-right: 25px; }
.st-dot { width: 8px; height: 8px; border-radius: 50%; background: #fff; }
.st-mute { width: 24px; height: 24px; margin-left: auto; margin-right: 14px; }
.st-wifi { width: 39px; height: 26px; margin-right: 6px; }
.st-batt { width: 16px; height: 26px; }

.bar {
  display: flex;
  justify-content: space-between;
  gap: 12px;
  padding: 0 12px;
}

.round, .peer, .composer {
  background: #252d3a;
  box-shadow: inset 0 0 0 1px rgba(255, 255, 255, .03), inset 0 1px 0 rgba(255, 255, 255, .05);
}

.round {
  flex: none;
  display: grid;
  place-items: center;
  width: 90px;
  height: 90px;
  border-radius: 50%;
}

.peer {
  flex: 1;
  display: flex;
  align-items: center;
  gap: 16px;
  height: 90px;
  padding: 0 4px;
  border-radius: 45px;
  color: #fff;
  text-decoration: none;
}

.avatar { flex: none; width: 80px; height: 80px; }
.who { display: flex; flex-direction: column; padding-top: 2px; }
.name { font-size: 34px; font-weight: 500; line-height: 40px; }
.kind { color: #74808c; font-size: 26px; line-height: 36px; }

.composer {
  position: relative;
  display: flex;
  align-items: center;
  height: 86px;
  margin: 0 14px;
  padding: 0 6px 0 24px;
  border-radius: 43px;
  background: #222d39;
}

.tool {
  flex: none;
  display: grid;
  place-items: center;
  background: none;
}

.entry {
  flex: 1;
  min-width: 0;
  display: flex;
  align-items: center;
  height: 48px;
  margin: 0 24px 0 25px;
  padding-bottom: 4px;
  border-left: 4px solid #58a5dc;
}

.entry input {
  width: 100%;
  margin-left: -3px;
  border: 0;
  padding: 0;
  outline: 0;
  background: none;
  color: #fff;
  font-family: inherit;
  font-size: 35px;
  line-height: 44px;
}

.entry input::placeholder { color: #74808c; opacity: 1; }

.camera {
  flex: none;
  display: grid;
  place-items: center;
  width: 74px;
  height: 74px;
  margin-left: 28px;
  border-radius: 50%;
  background: #2299f0;
}

.gesture {
  position: relative;
  width: 30%;
  height: 9px;
  margin: 36px auto 19px;
  border-radius: 5px;
  background: #eeeeef;
}
```
